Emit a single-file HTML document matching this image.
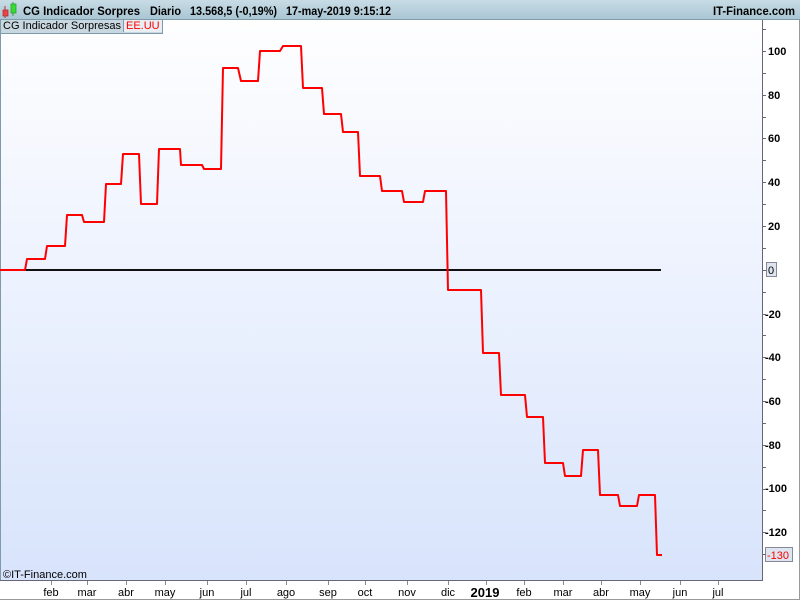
<!DOCTYPE html>
<html><head><style>
body{margin:0;width:800px;height:600px;overflow:hidden;font-family:"Liberation Sans",sans-serif;background:#fff;position:relative}
#hdr{position:absolute;left:0;top:0;width:800px;height:20px;background:linear-gradient(#c8dce6,#a9c6d3);border-bottom:1px solid #7f9aa8;box-sizing:border-box}
#plot{position:absolute;left:0;top:20px;width:762px;height:560px;background:linear-gradient(#fefeff,#d8e4fc);border-left:1px solid #7f9aa8;box-sizing:border-box}
#leg{position:absolute;left:0;top:20px;height:14px;font-size:11px;line-height:13px;background:#c9d8e0;border:1px solid #7f9aa8;border-top:none;box-sizing:border-box;white-space:nowrap}
svg{position:absolute;left:0;top:0}
</style></head><body>
<div id="plot"></div>
<div id="hdr">
<svg width="800" height="20">
<line x1="5" y1="6" x2="5" y2="18" stroke="#a33" /><rect x="3" y="10" width="5" height="6" fill="#e44" stroke="#a33" stroke-width=".8"/><line x1="13" y1="2" x2="13" y2="16" stroke="#393"/><rect x="11" y="4" width="5" height="9" fill="#3d3" stroke="#393" stroke-width=".8"/>
<g font-size="12" font-weight="bold" lengthAdjust="spacingAndGlyphs">
<text x="23" y="15" textLength="117" lengthAdjust="spacingAndGlyphs">CG Indicador Sorpres</text>
<text x="150" y="15" textLength="31" lengthAdjust="spacingAndGlyphs">Diario</text>
<text x="190" y="15" textLength="87" lengthAdjust="spacingAndGlyphs">13.568,5 (-0,19%)</text>
<text x="286" y="15" textLength="105" lengthAdjust="spacingAndGlyphs">17-may-2019 9:15:12</text>
<text x="713" y="15" textLength="82" lengthAdjust="spacingAndGlyphs">IT-Finance.com</text>
</g></svg>
</div>
<div id="leg"><span style="padding:0 2px">CG Indicador Sorpresas</span><span style="color:red;border-left:1px solid #7f9aa8;padding:0 2px;background:#e8eef2">EE.UU</span></div>
<svg width="800" height="600" style="top:0">
<g stroke="#667" stroke-width="1">
<line x1="762.5" y1="20" x2="762.5" y2="581"/>
<line x1="0" y1="580.5" x2="762" y2="580.5"/>
<line x1="0" y1="599.5" x2="800" y2="599.5" stroke="#999"/>
<line x1="799.5" y1="20" x2="799.5" y2="600" stroke="#999"/>
</g>
<line x1="0" y1="270" x2="661" y2="270" stroke="#111" stroke-width="2"/>
<polyline fill="none" stroke="#f00" stroke-width="2" stroke-linejoin="round" points="0,270 25,270 27,259 45,259 47,246 65,246 67,215 82,215 84,222 104,222 106,184 121,184 123,154 139,154 141,204 157,204 159,149 180,149 181,165 202,165 204,169 221,169 223,68 238,68 241,81 258,81 260,51 280,51 283,46 301,46 303,88 322,88 324,114 341,114 343,132 358,132 360,176 380,176 382,191 402,191 404,202 423,202 425,191 446,191 448,290 481,290 483,353 499,353 501,395 525,395 527,417 543,417 545,463 563,463 565,476 581,476 583,450 598,450 600,495 618,495 620,506 637,506 639,495 655,495 657,555 662,555"/>
<rect x="766.5" y="262.5" width="10" height="14" fill="#dde6f0" stroke="#889"/>
<text x="768" y="274" font-size="11">0</text>
<rect x="765.5" y="547.5" width="27" height="14" fill="#dde6f0" stroke="#889"/>
<text x="767" y="559" font-size="11" fill="red">-130</text>
<text x="3" y="578" font-size="11">©IT-Finance.com</text>
<g font-size="11" text-anchor="middle">
<text x="51" y="596">feb</text><text x="87" y="596">mar</text><text x="126" y="596">abr</text><text x="165" y="596">may</text><text x="207" y="596">jun</text><text x="246" y="596">jul</text><text x="286" y="596">ago</text><text x="328" y="596">sep</text><text x="365" y="596">oct</text><text x="407" y="596">nov</text><text x="448" y="596">dic</text><text x="485" y="597" font-weight="bold" font-size="13">2019</text><text x="524" y="596">feb</text><text x="563" y="596">mar</text><text x="601" y="596">abr</text><text x="640" y="596">may</text><text x="680" y="596">jun</text><text x="718" y="596">jul</text>
</g>
<g stroke="#889">
<line x1="51.5" y1="581" x2="51.5" y2="585"/><line x1="87.5" y1="581" x2="87.5" y2="585"/><line x1="126.5" y1="581" x2="126.5" y2="585"/><line x1="165.5" y1="581" x2="165.5" y2="585"/><line x1="207.5" y1="581" x2="207.5" y2="585"/><line x1="246.5" y1="581" x2="246.5" y2="585"/><line x1="286.5" y1="581" x2="286.5" y2="585"/><line x1="328.5" y1="581" x2="328.5" y2="585"/><line x1="365.5" y1="581" x2="365.5" y2="585"/><line x1="407.5" y1="581" x2="407.5" y2="585"/><line x1="448.5" y1="581" x2="448.5" y2="585"/><line x1="486.5" y1="581" x2="486.5" y2="585"/><line x1="524.5" y1="581" x2="524.5" y2="585"/><line x1="563.5" y1="581" x2="563.5" y2="585"/><line x1="601.5" y1="581" x2="601.5" y2="585"/><line x1="640.5" y1="581" x2="640.5" y2="585"/><line x1="680.5" y1="581" x2="680.5" y2="585"/><line x1="718.5" y1="581" x2="718.5" y2="585"/>
</g>
<g font-size="11" font-weight="bold">
<text x="768" y="55">100</text><text x="768" y="99">80</text><text x="768" y="142">60</text><text x="768" y="186">40</text><text x="768" y="230">20</text><text x="765" y="318">-20</text><text x="765" y="361">-40</text><text x="765" y="405">-60</text><text x="765" y="449">-80</text><text x="765" y="492">-100</text><text x="765" y="536">-120</text>
</g>
<g stroke="#667">
<line x1="762" y1="29.5" x2="766" y2="29.5"/><line x1="762" y1="51.5" x2="766" y2="51.5"/><line x1="762" y1="73.5" x2="766" y2="73.5"/><line x1="762" y1="95.5" x2="766" y2="95.5"/><line x1="762" y1="117.5" x2="766" y2="117.5"/><line x1="762" y1="138.5" x2="766" y2="138.5"/><line x1="762" y1="160.5" x2="766" y2="160.5"/><line x1="762" y1="182.5" x2="766" y2="182.5"/><line x1="762" y1="204.5" x2="766" y2="204.5"/><line x1="762" y1="226.5" x2="766" y2="226.5"/><line x1="762" y1="248.5" x2="766" y2="248.5"/><line x1="762" y1="270.5" x2="766" y2="270.5"/><line x1="762" y1="292.5" x2="766" y2="292.5"/><line x1="762" y1="314.5" x2="766" y2="314.5"/><line x1="762" y1="335.5" x2="766" y2="335.5"/><line x1="762" y1="357.5" x2="766" y2="357.5"/><line x1="762" y1="379.5" x2="766" y2="379.5"/><line x1="762" y1="401.5" x2="766" y2="401.5"/><line x1="762" y1="423.5" x2="766" y2="423.5"/><line x1="762" y1="445.5" x2="766" y2="445.5"/><line x1="762" y1="467.5" x2="766" y2="467.5"/><line x1="762" y1="489.5" x2="766" y2="489.5"/><line x1="762" y1="510.5" x2="766" y2="510.5"/><line x1="762" y1="532.5" x2="766" y2="532.5"/><line x1="762" y1="554.5" x2="766" y2="554.5"/>
</g>
</svg>
</body></html>
